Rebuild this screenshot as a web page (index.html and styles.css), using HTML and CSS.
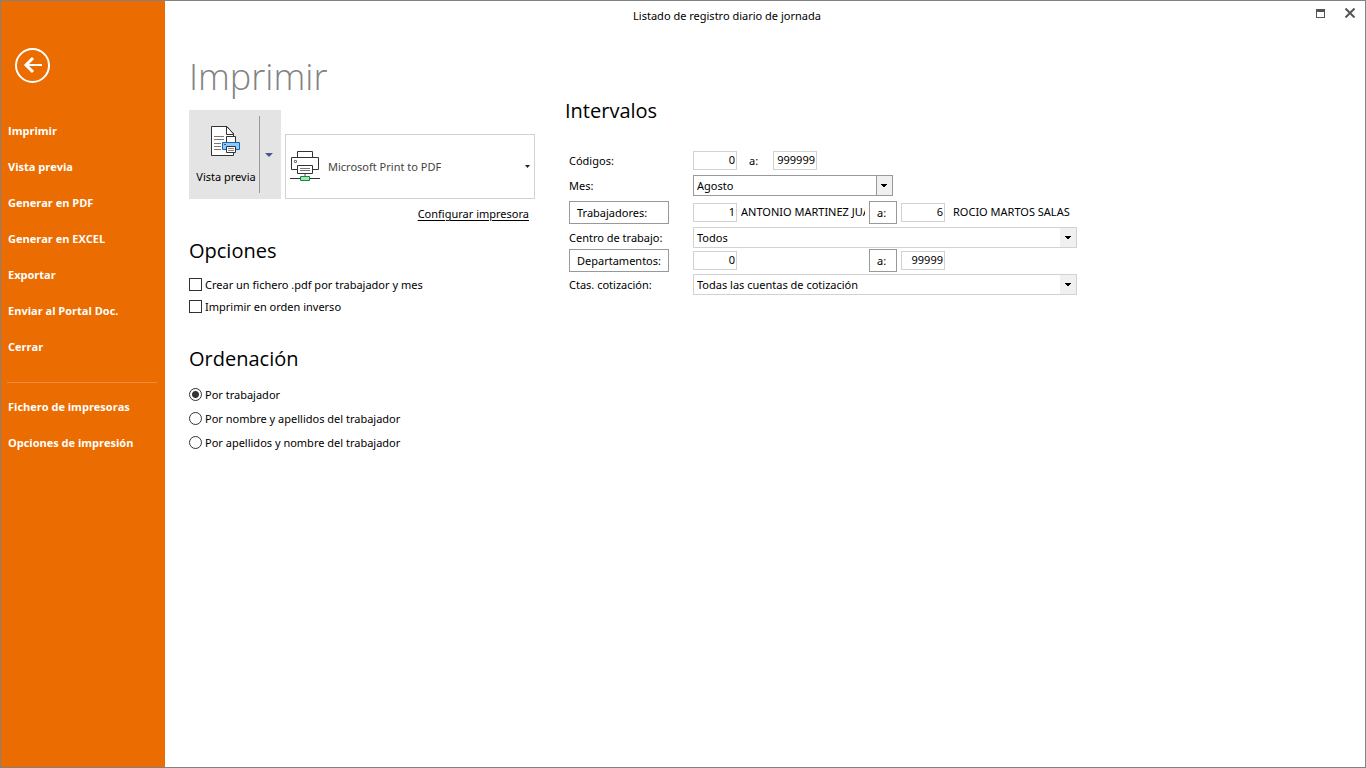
FILE: index.html
```html
<!DOCTYPE html>
<html lang="es">
<head>
<meta charset="utf-8">
<meta name="viewport" content="width=device-width, initial-scale=1">
<title>Listado de registro diario de jornada</title>
<link rel="stylesheet" href="styles.css">
</head>
<body>
<div class="window">
  <nav class="sidebar" aria-label="Archivo">
    <button class="back" type="button" aria-label="Volver">
      <svg width="35" height="35" viewBox="0 0 35 35" fill="none" stroke="#fff"><circle cx="17.500" cy="17.500" r="16.500" stroke-width="2"/><path d="M27 17H11" stroke-width="2"/><path d="M18 10L11 17L18 24" stroke-width="3"/></svg>
    </button>
    <button class="nav-item" type="button">Imprimir</button>
    <button class="nav-item" type="button">Vista previa</button>
    <button class="nav-item" type="button">Generar en PDF</button>
    <button class="nav-item" type="button">Generar en EXCEL</button>
    <button class="nav-item" type="button">Exportar</button>
    <button class="nav-item" type="button">Enviar al Portal Doc.</button>
    <button class="nav-item" type="button">Cerrar</button>
    <hr class="nav-line">
    <button class="nav-item" type="button">Fichero de impresoras</button>
    <button class="nav-item" type="button">Opciones de impresión</button>
  </nav>
  <div class="main">
    <header class="titlebar">
      <span class="window-title">Listado de registro diario de jornada</span>
      <span class="window-buttons">
        <button class="window-button" type="button" aria-label="Maximizar"><svg width="9" height="9" viewBox="0 0 9 9" shape-rendering="crispEdges"><path d="M0 0h9v9H0zM1 3v5h7V3z" fill="#555" fill-rule="evenodd"/></svg></button>
        <button class="window-button" type="button" aria-label="Cerrar"><svg width="10" height="10" viewBox="0 0 10 10"><path d="M.5 .5l9 9M9.500 .5l-9 9" stroke="#555" stroke-width="2"/></svg></button>
      </span>
    </header>
    <main class="content">
      <section class="print">
        <h1 class="page-title">Imprimir</h1>
        <div class="print-row">
          <div class="preview">
            <button class="preview-main" type="button">
              <svg width="30" height="31" viewBox="0 0 30 31" fill="#fff" stroke="#333" stroke-width="1"><path d="M.5 .5H16L22.500 8V29.500H.5z"/><path d="M15.500 .5V8.500H22.500M16 1l7 7" fill="none"/><path d="M3 10.500h10M3 13.500h10M3 17.500h7M3 20.500h7M3 23.500h7" stroke="#777"/><path d="M15.500 10.500h9v6h-9z"/><path d="M11.500 16.500h17v7h-17z" fill="#90c8f6" stroke="#1267b4"/><path d="M13 18.500h2" stroke="#1267b4"/><path d="M15.500 20.500h9v6h-9z"/><path d="M17 22.500h6M17 24.500h6" stroke="#888"/></svg>
              <span>Vista previa</span>
            </button>
            <button class="preview-more" type="button" aria-label="Más opciones de vista previa"><svg width="8" height="4" viewBox="0 0 8 4"><path d="M0 0h8L4 4z" fill="#44598a"/></svg></button>
          </div>
          <button class="printer" type="button">
            <svg width="30" height="31" viewBox="0 0 30 31" fill="#fff" stroke="#333"><path d="M7.500 .5h15v7h-15z"/><path d="M1.500 6.500h27v12h-27z"/><path d="M4.500 9.500h2v2h-2z" stroke="#777"/><path d="M7.500 14.500h15v8h-15z"/><path d="M10 17.500h10M10 19.500h10" stroke="#777"/><path d="M15 23v2" stroke="#aaa" stroke-width="2"/><path d="M0 27.500h30"/><path d="M10.500 25.500h9v4h-9z" fill="#b6dcb9" stroke="#009640"/></svg>
            <span class="printer-name">Microsoft Print to PDF</span>
            <svg width="5" height="3" viewBox="0 0 5 3"><path d="M0 0h5L2.500 3z" fill="#222"/></svg>
          </button>
        </div>
        <a class="configure" href="#">Configurar impresora</a>
        <h2 class="heading">Opciones</h2>
        <div class="checks">
          <label class="choice"><input class="box" type="checkbox">Crear un fichero .pdf por trabajador y mes</label>
          <label class="choice"><input class="box" type="checkbox">Imprimir en orden inverso</label>
        </div>
        <h2 class="heading">Ordenación</h2>
        <div class="radios">
          <label class="choice"><input class="dot" type="radio" name="orden" checked>Por trabajador</label>
          <label class="choice"><input class="dot" type="radio" name="orden">Por nombre y apellidos del trabajador</label>
          <label class="choice"><input class="dot" type="radio" name="orden">Por apellidos y nombre del trabajador</label>
        </div>
      </section>
      <section class="ranges">
        <h2 class="heading">Intervalos</h2>
        <form class="form">
          <label for="codigo">Códigos:</label>
          <div class="codes"><input class="number" id="codigo" type="text" value="0"><label for="codigo-fin">a:</label><input class="number" id="codigo-fin" type="text" value="999999"></div>
          <label for="mes">Mes:</label>
          <select class="select month" id="mes"><option>Agosto</option></select>
          <button class="key" type="button">Trabajadores:</button>
          <div class="span"><input class="number" type="text" value="1" aria-label="Primer trabajador"><span class="person">ANTONIO MARTINEZ JUA</span><button class="key" type="button">a:</button><input class="number" type="text" value="6" aria-label="Último trabajador"><span class="person last">ROCIO MARTOS SALAS</span></div>
          <label for="centro">Centro de trabajo:</label>
          <select class="select" id="centro"><option>Todos</option></select>
          <button class="key" type="button">Departamentos:</button>
          <div class="span"><input class="number" type="text" value="0" aria-label="Primer departamento"><span class="person"></span><button class="key" type="button">a:</button><input class="number" type="text" value="99999" aria-label="Último departamento"></div>
          <label for="cuentas">Ctas. cotización:</label>
          <select class="select" id="cuentas"><option>Todas las cuentas de cotización</option></select>
        </form>
      </section>
    </main>
  </div>
</div>
</body>
</html>
```
FILE: styles.css
```css
* { box-sizing: border-box; }

body {
  margin: 0;
  background: #fff;
  color: #000;
  font: 11px/16px "Noto Sans", "Open Sans", sans-serif;
}

button, input, select { font: inherit; color: inherit; }
button { padding: 0; border: 0; background: none; }
svg { display: block; flex: none; }

.window {
  display: flex;
  min-height: 100vh;
  border: 1px solid #828282;
}

/* Sidebar */
.sidebar {
  flex: none;
  display: flex;
  flex-direction: column;
  width: 164px;
  padding-top: 47px;
  background: #eb6c00;
  color: #fff;
}
.back { align-self: flex-start; margin: 0 0 30px 14px; }
.nav-item {
  height: 36px;
  padding-left: 7px;
  text-align: left;
  font-weight: 700;
  font-family: "Open Sans", sans-serif;
}
.nav-line {
  width: 150px;
  margin: 17px 6px 6px;
  border: 0;
  border-top: 1px solid #f08c3c;
}

/* Title bar */
.main { flex: 1; min-width: 0; }
.titlebar {
  display: grid;
  grid-template-columns: 1fr auto;
  align-items: center;
  height: 30px;
}
.window-title {
  grid-area: 1 / 1 / 2 / 3;
  justify-self: center;
  margin-right: 76px;
}
.window-buttons {
  grid-area: 1 / 2;
  display: flex;
  gap: 20px;
  padding: 0 10px 6px 0;
}

/* Print column */
.content { display: flex; gap: 30px; padding-left: 24px; }
.print { flex: none; width: 346px; }
.page-title {
  margin: 20px 0 7px;
  color: #828282;
  font-family: "Open Sans", sans-serif;
  font-size: 36px;
  font-weight: 350;
  line-height: 52px;
}
.print-row { display: flex; gap: 4px; align-items: flex-end; }
.preview { display: flex; width: 92px; height: 89px; background: #e4e4e4; }
.preview-main {
  display: flex;
  flex-direction: column;
  align-items: center;
  gap: 12px;
  width: 71px;
  margin: 6px 0;
  padding: 10px 0 0 4px;
  border-right: 1px solid #999;
  white-space: nowrap;
}
.preview-more { display: flex; align-items: center; justify-content: center; width: 18px; }
.printer {
  flex: 1;
  display: flex;
  align-items: center;
  height: 65px;
  padding: 0 4px;
  border: 1px solid #d2d2d2;
  color: #444;
}
.printer-name { flex: 1; padding-left: 8px; text-align: left; }
.configure {
  display: block;
  width: fit-content;
  margin: 7px 6px 0 auto;
  color: #000;
  text-underline-offset: 2px;
}
.heading {
  margin: 0;
  font-family: "Open Sans", sans-serif;
  font-size: 20px;
  font-weight: 400;
  line-height: 28px;
}
.configure + .heading { margin-top: 15px; }
.checks { display: grid; gap: 6px; padding: 12px 0 30px; }
.radios { display: grid; gap: 8px; padding-top: 14px; }
.choice { display: flex; align-items: center; gap: 3px; }
.box, .dot {
  flex: none;
  appearance: none;
  width: 13px;
  height: 13px;
  margin: 0 0 2px;
  border: 1px solid #333;
  background: #fff;
}
.dot { border-radius: 50%; }
.dot:checked { background: radial-gradient(circle, #333 3px, #fff 4px); }

/* Interval form */
.ranges { flex: 1; min-width: 0; padding-top: 66px; }
.form {
  display: grid;
  grid-template-columns: 124px minmax(0, 384px);
  grid-template-rows: 26px 24px 30px 20px 26px 22px;
  align-items: center;
  padding: 22px 0 0 4px;
}
.form label { padding-top: 2px; }
.number {
  width: 44px;
  height: 19px;
  padding: 0 1px 2px;
  border: 1px solid #d2d2d2;
  background: #fff;
  text-align: right;
}
.codes { display: flex; align-items: center; }
.codes label { width: 36px; padding-left: 12px; }
.span {
  display: grid;
  grid-template-columns: 44px 124px 28px 44px 1fr;
  column-gap: 4px;
  align-items: center;
}
.person { overflow: hidden; white-space: nowrap; }
.person.last { padding-left: 4px; }
.key {
  width: 100px;
  height: 23px;
  padding: 1px 0 0 7px;
  border: 1px solid #999;
  background: #fff;
  text-align: left;
  white-space: nowrap;
}
.span .key { width: 28px; }
.select {
  appearance: none;
  width: 100%;
  height: 21px;
  padding: 1px 20px 0 3px;
  border: 1px solid #d2d2d2;
  border-radius: 0;
  background:
    conic-gradient(from 315deg at 50% 100%, #000 90deg, transparent 0) right 5px center / 6px 3px no-repeat,
    linear-gradient(#f0f0f0, #f0f0f0) right / 16px 100% no-repeat,
    #fff;
}
.month {
  width: 200px;
  border-color: #999;
  background:
    conic-gradient(from 315deg at 50% 100%, #000 90deg, transparent 0) right 5px center / 6px 3px no-repeat,
    linear-gradient(#f0f0f0, #f0f0f0) right / 15px 100% no-repeat,
    linear-gradient(#999, #999) right / 16px 100% no-repeat,
    #fff;
}
```
